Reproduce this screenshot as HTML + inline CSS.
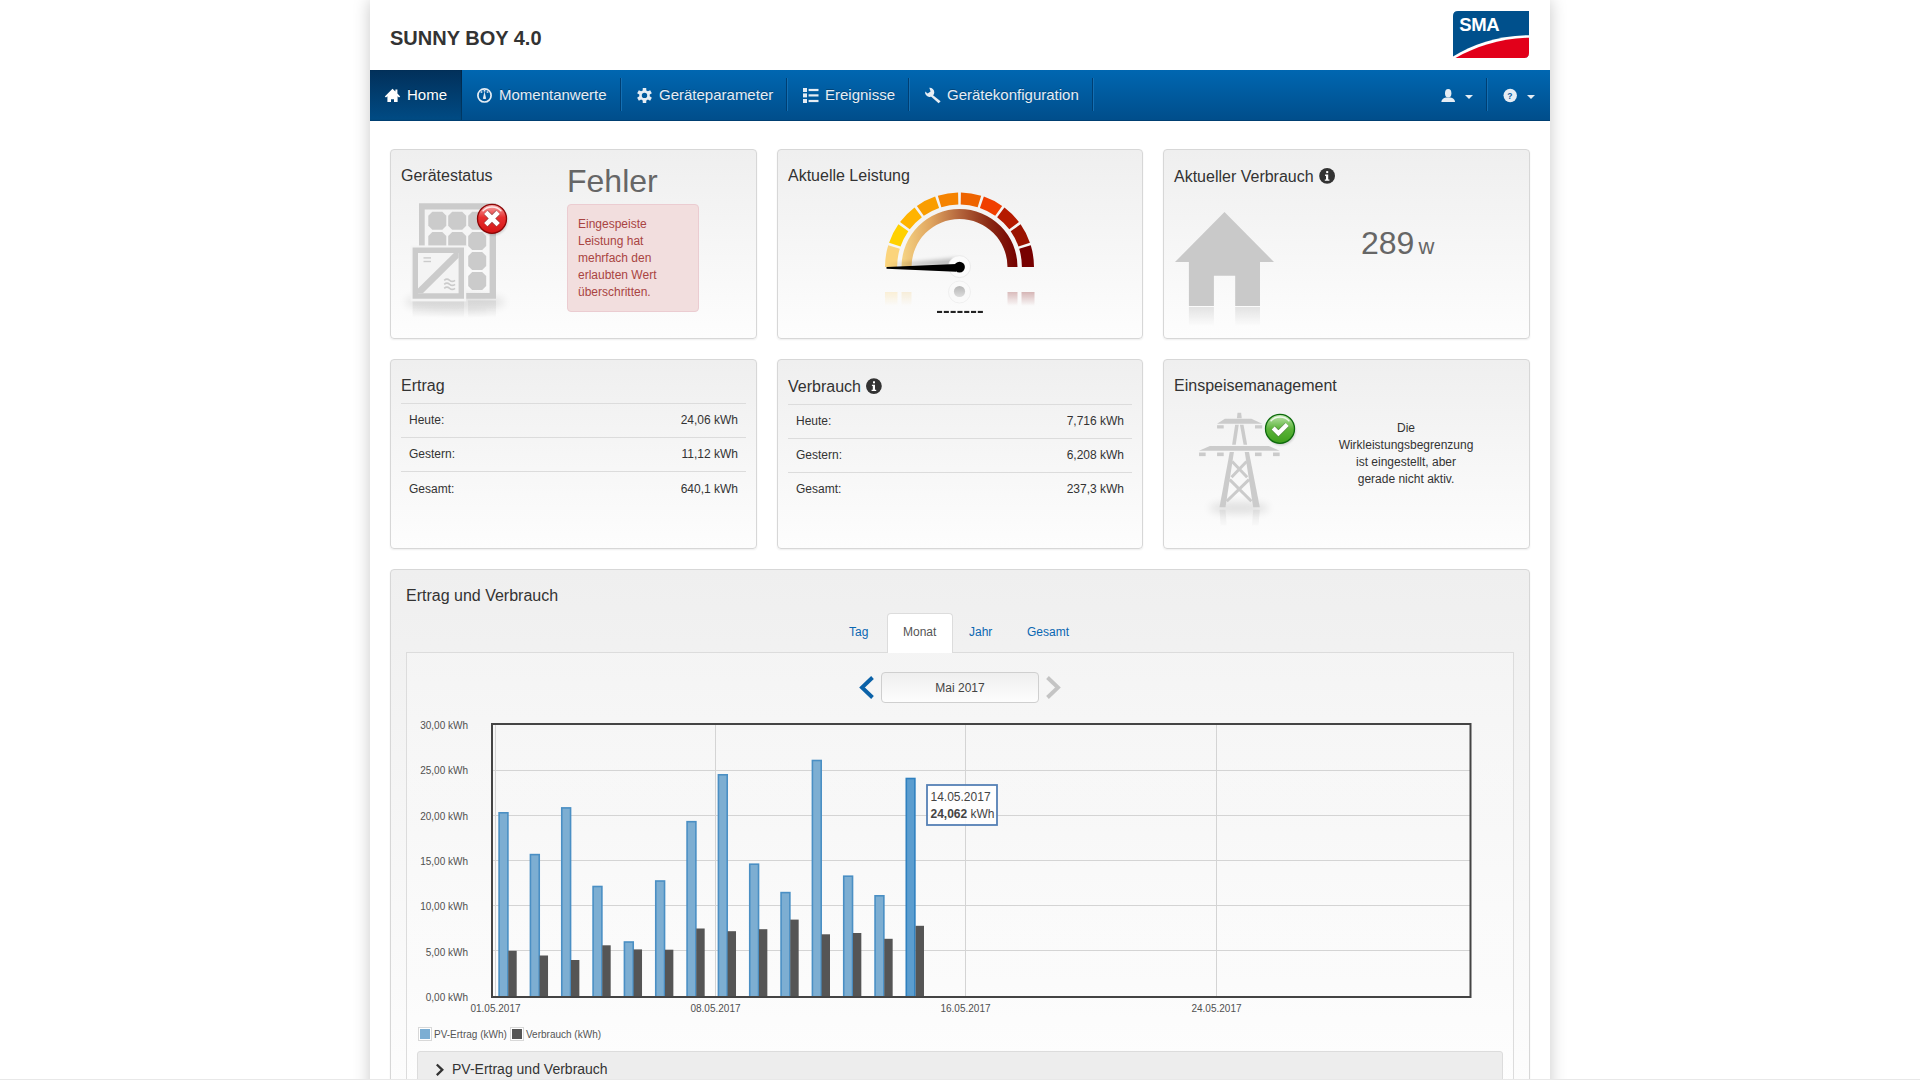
<!DOCTYPE html>
<html><head><meta charset="utf-8">
<style>
*{box-sizing:border-box;margin:0;padding:0}
html,body{width:1920px;height:1080px;overflow:hidden;background:#fff;-webkit-font-smoothing:antialiased;font-family:"Liberation Sans",sans-serif;color:#333}
.abs{position:absolute}
#wrap{position:absolute;left:370px;top:0;width:1180px;height:1200px;background:#fff;box-shadow:0 0 16px rgba(0,0,0,0.22)}
#title{position:absolute;left:390px;top:27px;font-size:20px;font-weight:bold;color:#333;line-height:23px}
#nav{position:absolute;left:370px;top:70px;width:1180px;height:51px;background:linear-gradient(#0067b1,#004e8b);border-bottom:1px solid #003f72}
.ni{position:absolute;top:0;height:50px;color:#e6edf4;font-size:15px;line-height:50px;white-space:nowrap;text-shadow:0 -1px 0 rgba(0,0,0,0.25)}
.ni.active{color:#fff;background:linear-gradient(#02305a,#004b84);box-shadow:inset -1px 0 1px rgba(0,0,0,0.25)}
.sep{position:absolute;top:8px;width:2px;height:33px;border-left:1px solid #003f73;border-right:1px solid #1470b4}
.card{position:absolute;border:1px solid #d7d7d7;border-radius:4px;background:linear-gradient(#efefef,#fdfdfd);box-shadow:0 1px 2px rgba(0,0,0,0.07)}
.ctitle{position:absolute;left:10px;top:17px;font-size:16px;color:#333;line-height:18px;white-space:nowrap}
.tbl{position:absolute;left:10px;right:10px;top:43px}
.row{position:relative;height:34px;border-top:1px solid #dcdcdc;font-size:12px;line-height:33px;color:#333}
.row .l{position:absolute;left:8px}
.row .r{position:absolute;right:8px}
#ov{position:absolute;left:0;top:0}
</style></head><body>
<div id="wrap"></div>
<div id="title">SUNNY BOY 4.0</div>

<div id="nav">
  <div class="ni active" style="left:0;width:92px"><span class="abs" style="left:37px">Home</span></div>
  <div class="ni" style="left:92px;width:159px"><span class="abs" style="left:37px">Momentanwerte</span></div>
  <div class="sep" style="left:250px"></div>
  <div class="ni" style="left:252px;width:164px"><span class="abs" style="left:37px">Geräteparameter</span></div>
  <div class="sep" style="left:416px"></div>
  <div class="ni" style="left:418px;width:121px"><span class="abs" style="left:37px">Ereignisse</span></div>
  <div class="sep" style="left:538px"></div>
  <div class="ni" style="left:540px;width:183px"><span class="abs" style="left:37px">Gerätekonfiguration</span></div>
  <div class="sep" style="left:722px"></div>
  <div class="sep" style="left:1116px"></div>
</div>

<div class="card" style="left:390px;top:149px;width:367px;height:190px">
  <div class="ctitle">Gerätestatus</div>
  <div class="abs" style="left:176px;top:11px;font-size:32px;line-height:40px;color:#666">Fehler</div>
  <div class="abs" style="left:176px;top:54px;width:132px;height:108px;background:#f2dede;border:1px solid #ebccd1;border-radius:4px;color:#a94442;font-size:12px;line-height:17px;padding:11px 10px">Eingespeiste Leistung hat mehrfach den erlaubten Wert überschritten.</div>
</div>
<div class="card" style="left:777px;top:149px;width:366px;height:190px"><div class="ctitle">Aktuelle Leistung</div></div>
<div class="card" style="left:1163px;top:149px;width:367px;height:190px"><div class="ctitle" style="top:18px">Aktueller Verbrauch</div>
  <div class="abs" style="left:197px;top:73px;font-size:32px;line-height:40px;color:#666;white-space:nowrap">289<span style="font-size:22px;margin-left:4px">w</span></div>
</div>

<div class="card" style="left:390px;top:359px;width:367px;height:190px"><div class="ctitle">Ertrag</div>
  <div class="tbl"><div class="row"><span class="l">Heute:</span><span class="r">24,06 kWh</span></div><div class="row"><span class="l">Gestern:</span><span class="r">11,12 kWh</span></div><div class="row" style="line-height:35px"><span class="l">Gesamt:</span><span class="r">640,1 kWh</span></div></div>
</div>
<div class="card" style="left:777px;top:359px;width:366px;height:190px"><div class="ctitle" style="top:18px">Verbrauch</div>
  <div class="tbl" style="top:44px"><div class="row"><span class="l">Heute:</span><span class="r">7,716 kWh</span></div><div class="row"><span class="l">Gestern:</span><span class="r">6,208 kWh</span></div><div class="row"><span class="l">Gesamt:</span><span class="r">237,3 kWh</span></div></div>
</div>
<div class="card" style="left:1163px;top:359px;width:367px;height:190px"><div class="ctitle">Einspeisemanagement</div>
  <div class="abs" style="left:160px;top:60px;width:164px;text-align:center;font-size:12px;line-height:17px;color:#333">Die<br>Wirkleistungsbegrenzung<br>ist eingestellt, aber<br>gerade nicht aktiv.</div>
</div>

<div class="card" style="left:390px;top:569px;width:1140px;height:620px;background:linear-gradient(#efefef,#fdfdfd 85%)">
  <div class="ctitle" style="left:15px;top:17px">Ertrag und Verbrauch</div>
</div>
<div class="abs" style="left:406px;top:652px;width:1108px;height:500px;border:1px solid #dcdcdc;border-bottom:none;background:linear-gradient(rgba(255,255,255,0.25),rgba(255,255,255,0.3))"></div>
<div class="abs" style="left:887px;top:613px;width:66px;height:40px;background:#fff;border:1px solid #dcdcdc;border-bottom:none;border-radius:4px 4px 0 0"></div>
<div class="abs" style="left:849px;top:625px;font-size:12px;line-height:14px;color:#0a67b2">Tag</div>
<div class="abs" style="left:903px;top:625px;font-size:12px;line-height:14px;color:#555">Monat</div>
<div class="abs" style="left:969px;top:625px;font-size:12px;line-height:14px;color:#0a67b2">Jahr</div>
<div class="abs" style="left:1027px;top:625px;font-size:12px;line-height:14px;color:#0a67b2">Gesamt</div>
<div class="abs" style="left:881px;top:672px;width:158px;height:31px;border:1px solid #cfcfcf;border-radius:4px;background:linear-gradient(#efefef,#fdfdfd);font-size:12px;line-height:31px;text-align:center;color:#444">Mai 2017</div>
<div class="abs" style="left:417px;top:1051px;width:1086px;height:60px;border:1px solid #dcdcdc;border-radius:3px;background:#ededed"></div>
<div class="abs" style="left:452px;top:1061px;font-size:14px;line-height:16px;color:#333">PV-Ertrag und Verbrauch</div>
<div class="abs" style="left:0;top:1079px;width:1920px;height:1px;background:#e8e8e8"></div>
<svg id="ov" width="1920" height="1080" viewBox="0 0 1920 1080" font-family="Liberation Sans"><defs><linearGradient id="arcg" x1="901" y1="0" x2="1018" y2="0" gradientUnits="userSpaceOnUse"><stop offset="0" stop-color="#f6d585"/><stop offset="0.25" stop-color="#e0a660"/><stop offset="0.5" stop-color="#b4653c"/><stop offset="0.75" stop-color="#8a2a14"/><stop offset="1" stop-color="#740000"/></linearGradient><linearGradient id="redb" x1="0" y1="0" x2="0" y2="1"><stop offset="0" stop-color="#f8b0b0"/><stop offset="0.45" stop-color="#e83030"/><stop offset="1" stop-color="#d41414"/></linearGradient><linearGradient id="grnb" x1="0" y1="0" x2="0" y2="1"><stop offset="0" stop-color="#c4e8b4"/><stop offset="0.5" stop-color="#5cb43a"/><stop offset="1" stop-color="#3e9e1c"/></linearGradient><linearGradient id="refl" x1="0" y1="0" x2="0" y2="1"><stop offset="0" stop-color="#fff" stop-opacity="0"/><stop offset="1" stop-color="#fff" stop-opacity="1"/></linearGradient><linearGradient id="mg" x1="0" y1="0" x2="0" y2="1"><stop offset="0" stop-color="#fff"/><stop offset="1" stop-color="#000"/></linearGradient><mask id="m_dev"><rect x="405" y="299" width="100" height="19" fill="url(#mg)"/></mask><mask id="m_gauge"><rect x="880" y="291" width="160" height="15" fill="url(#mg)"/></mask><mask id="m_house"><rect x="1180" y="306" width="90" height="20" fill="url(#mg)"/></mask><mask id="m_tower"><rect x="1210" y="508" width="60" height="20" fill="url(#mg)"/></mask><linearGradient id="dotg" x1="0" y1="0" x2="0" y2="1"><stop offset="0" stop-color="#b6b6b6"/><stop offset="1" stop-color="#dcdcdc"/></linearGradient><filter id="blur2" x="-50%" y="-50%" width="200%" height="200%"><feGaussianBlur stdDeviation="2"/></filter><filter id="blur4" x="-50%" y="-50%" width="200%" height="200%"><feGaussianBlur stdDeviation="4"/></filter><filter id="blur1" x="-50%" y="-50%" width="200%" height="200%"><feGaussianBlur stdDeviation="0.8"/></filter></defs><g transform="translate(1453,11)"><path d="M5,0 H76 V42 Q76,47 71,47 H0 V5 Q0,0 5,0 Z" fill="#00508c"/><path d="M0,45.5 C20,33 45,24.5 76,24.2 V42 Q76,47 71,47 H0 Z" fill="#fff"/><path d="M2.5,47 C22,36 48,27.2 76,26.8 V42 Q76,47 71,47 Z" fill="#e2001a"/><text x="6.3" y="20.2" font-weight="bold" font-size="18.5" fill="#fff" letter-spacing="-0.4">SMA</text></g><g fill="#e6edf4"><path fill="#fff" d="M392.5,88.8 L384.8,96.4 L386,97.6 L387.4,96.3 V102 H391 V99.2 H394 V102 H397.6 V96.3 L399,97.6 L400.2,96.4 L397.4,93.6 V89.4 H395.4 V91.6 Z"/><circle cx="484.5" cy="95.4" r="6.6" fill="none" stroke="#e6edf4" stroke-width="1.7"/><path d="M484.5,91.2 L486.1,98.4 Q484.5,99.6 482.9,98.4 Z"/><rect x="480.6" y="91.3" width="1.7" height="1.5"/><rect x="483.7" y="90" width="1.7" height="1.6"/><rect x="486.7" y="91.3" width="1.7" height="1.5"/><path fill-rule="evenodd" d="M642.77,87.9 L646.23,87.9 L646.31,90.42 L647.91,91.34 L650.13,90.15 L651.86,93.15 L649.72,94.48 L649.72,96.32 L651.86,97.65 L650.13,100.65 L647.91,99.46 L646.31,100.38 L646.23,102.9 L642.77,102.9 L642.69,100.38 L641.09,99.46 L638.87,100.65 L637.14,97.65 L639.28,96.32 L639.28,94.48 L637.14,93.15 L638.87,90.15 L641.09,91.34 L642.69,90.42Z M647.2,95.4 A2.7,2.7 0 1 0 641.8,95.4 A2.7,2.7 0 1 0 647.2,95.4 Z"/><rect x="803" y="88" width="4" height="4"/><rect x="808.6" y="88.9" width="9.9" height="2.2"/><rect x="803" y="93.4" width="4" height="4"/><rect x="808.6" y="94.3" width="9.9" height="2.2"/><rect x="803" y="99" width="4" height="4"/><rect x="808.6" y="99.9" width="9.9" height="2.2"/><path d="M931.2,93.8 L940.6,101.2 L938.6,103.2 L929.9,95.4 Z"/><path fill-rule="evenodd" d="M929.3,87.8 A4.6,4.6 0 1 1 925.2,91.4 L927.6,93.6 L930.6,91.6 Z"/><ellipse cx="1448.2" cy="93.2" rx="3.2" ry="4.3"/><path d="M1441.3,102 Q1441.8,98.3 1446,97.6 H1450.4 Q1454.6,98.3 1455.1,102 Z"/><path d="M1465,95 H1473 L1469,99 Z"/><path d="M1527,95 H1535 L1531,99 Z"/><circle cx="1510.2" cy="95.5" r="6.7"/><text x="1509.9" y="98.6" font-size="8.5" font-weight="bold" fill="#0b5c9c" text-anchor="middle">?</text></g><g><ellipse cx="455" cy="302" rx="50" ry="9" fill="#000" opacity="0.09" filter="url(#blur4)"/><g mask="url(#m_dev)" fill="#cbcbcb"><rect x="412.6" y="300.5" width="51.4" height="17" opacity="0.6"/><rect x="468" y="300.5" width="28" height="17" opacity="0.6"/><rect x="468.2" y="307.5" width="18" height="12" rx="3" opacity="0.25"/></g><path fill="#cbcbcb" fill-rule="evenodd" d="M419,203.2 H496 V298.7 H419 Z M424.7,209.4 V293 H489.6 V209.4 Z"/><path fill="#cbcbcb" d="M432.3,211.8 H442.3 L446.3,215.8 V225.8 L442.3,229.8 H432.3 L428.3,225.8 V215.8 Z"/><path fill="#cbcbcb" d="M452.2,211.8 H462.2 L466.2,215.8 V225.8 L462.2,229.8 H452.2 L448.2,225.8 V215.8 Z"/><path fill="#cbcbcb" d="M472.2,211.8 H482.2 L486.2,215.8 V225.8 L482.2,229.8 H472.2 L468.2,225.8 V215.8 Z"/><path fill="#cbcbcb" d="M432.3,232 H442.3 L446.3,236 V246 L442.3,250 H432.3 L428.3,246 V236 Z"/><path fill="#cbcbcb" d="M452.2,232 H462.2 L466.2,236 V246 L462.2,250 H452.2 L448.2,246 V236 Z"/><path fill="#cbcbcb" d="M472.2,232 H482.2 L486.2,236 V246 L482.2,250 H472.2 L468.2,246 V236 Z"/><path fill="#cbcbcb" d="M472.2,252 H482.2 L486.2,256 V266 L482.2,270 H472.2 L468.2,266 V256 Z"/><path fill="#cbcbcb" d="M472.2,272 H482.2 L486.2,276 V286 L482.2,290 H472.2 L468.2,286 V276 Z"/><rect x="410.6" y="245.4" width="55.6" height="56" fill="#f4f4f4"/><path fill="#cbcbcb" fill-rule="evenodd" d="M412.6,247.6 H464 V298.7 H412.6 Z M418,253 V293.3 H458.6 V253 Z"/><path d="M418,293.3 V288.6 L453.9,253 H458.6 V257.7 L422.8,293.3 Z" fill="#cbcbcb"/><rect x="423.5" y="257.2" width="7.5" height="1.4" fill="#cbcbcb"/><rect x="423.5" y="260.8" width="7.5" height="1.4" fill="#cbcbcb"/><path d="M444.2,280.3 q2.7,-2.2 5.4,0 t5.4,0" fill="none" stroke="#cbcbcb" stroke-width="1.7"/><path d="M444.2,284.3 q2.7,-2.2 5.4,0 t5.4,0" fill="none" stroke="#cbcbcb" stroke-width="1.7"/><path d="M444.2,288.3 q2.7,-2.2 5.4,0 t5.4,0" fill="none" stroke="#cbcbcb" stroke-width="1.7"/></g><circle cx="493" cy="220.8" r="14.5" fill="#000" opacity="0.16" filter="url(#blur1)"/><circle cx="492" cy="218.8" r="14.5" fill="url(#redb)" stroke="#8c0606" stroke-width="1.3"/><path d="M482.6,211.2 A12.6,12.6 0 0 1 501.4,211.2" fill="none" stroke="#fff" stroke-width="1.3" opacity="0.8"/><path d="M485.8,212.3 L498.2,224.7 M498.2,212.3 L485.8,224.7" stroke="#555" stroke-width="6.2" opacity="0.45"/><path d="M485.8,212.3 L498.2,224.7 M498.2,212.3 L485.8,224.7" stroke="#fff" stroke-width="4.6"/><path d="M885,267 A74.5,74.5 0 0 1 888.22,245.33 L899.8,248.85 A62.4,62.4 0 0 0 897.1,267 Z" fill="#fbd47c"/><path d="M889.1,242.64 A74.5,74.5 0 0 1 898.41,224.36 L908.33,231.29 A62.4,62.4 0 0 0 900.53,246.59 Z" fill="#ffd100"/><path d="M900.07,222.07 A74.5,74.5 0 0 1 914.57,207.57 L921.87,217.22 A62.4,62.4 0 0 0 909.72,229.37 Z" fill="#ffb300"/><path d="M916.86,205.91 A74.5,74.5 0 0 1 935.14,196.6 L939.09,208.03 A62.4,62.4 0 0 0 923.79,215.83 Z" fill="#f99d00"/><path d="M937.83,195.72 A74.5,74.5 0 0 1 958.09,192.51 L958.31,204.61 A62.4,62.4 0 0 0 941.35,207.3 Z" fill="#f58300"/><path d="M960.91,192.51 A74.5,74.5 0 0 1 981.17,195.72 L977.65,207.3 A62.4,62.4 0 0 0 960.69,204.61 Z" fill="#ee6400"/><path d="M983.86,196.6 A74.5,74.5 0 0 1 1002.14,205.91 L995.21,215.83 A62.4,62.4 0 0 0 979.91,208.03 Z" fill="#f03f00"/><path d="M1004.43,207.57 A74.5,74.5 0 0 1 1018.93,222.07 L1009.28,229.37 A62.4,62.4 0 0 0 997.13,217.22 Z" fill="#b51a00"/><path d="M1020.59,224.36 A74.5,74.5 0 0 1 1029.9,242.64 L1018.47,246.59 A62.4,62.4 0 0 0 1010.67,231.29 Z" fill="#9a1200"/><path d="M1030.78,245.33 A74.5,74.5 0 0 1 1034,267 L1021.9,267 A62.4,62.4 0 0 0 1019.2,248.85 Z" fill="#770000"/><path d="M901.5,267 A58,58 0 0 1 1017.5,267 L1007.5,267 A48,48 0 0 0 911.5,267 Z" fill="url(#arcg)"/><g opacity="0.3" mask="url(#m_gauge)"><rect x="885" y="292" width="12.5" height="14" fill="#fbd47c"/><rect x="901.5" y="292" width="10" height="14" fill="#f1cf88"/><rect x="1007.5" y="292" width="10" height="14" fill="#8a2020"/><rect x="1021.5" y="292" width="13" height="14" fill="#7a0808"/></g><circle cx="959.5" cy="292" r="11" fill="#fafafa" stroke="#ececec" stroke-width="0.8"/><circle cx="959.5" cy="291.5" r="5.6" fill="url(#dotg)"/><path d="M887,265 L957,258 L957,266 Z" fill="#000" opacity="0.25" filter="url(#blur2)"/><circle cx="959.5" cy="266.6" r="11" fill="#fbfbfb" stroke="#e6e6e6" stroke-width="0.8"/><path d="M886.5,266.9 L956,264 L956,271.8 L886.5,268.7 Z" fill="#000"/><circle cx="959.5" cy="267.1" r="5.4" fill="#000"/><rect x="937" y="310.9" width="5.1" height="2.1" fill="#222"/><rect x="943.8" y="310.9" width="5.1" height="2.1" fill="#222"/><rect x="950.6" y="310.9" width="5.1" height="2.1" fill="#222"/><rect x="957.4" y="310.9" width="5.1" height="2.1" fill="#222"/><rect x="964.2" y="310.9" width="5.1" height="2.1" fill="#222"/><rect x="971" y="310.9" width="5.1" height="2.1" fill="#222"/><rect x="977.8" y="310.9" width="5.1" height="2.1" fill="#222"/><circle cx="1327.1" cy="175.9" r="8.3" fill="#fff" opacity="0.8"/><circle cx="1327.1" cy="175.9" r="7.9" fill="#333"/><rect x="1326.2" y="171.1" width="2" height="2" fill="#fff"/><path d="M1325.1,174.6 H1328.2 V179.5 H1329.4 V180.8 H1324.8 V179.5 H1326 V175.9 H1325.1 Z" fill="#fff"/><circle cx="873.9" cy="386.1" r="8.3" fill="#fff" opacity="0.8"/><circle cx="873.9" cy="386.1" r="7.9" fill="#333"/><rect x="873" y="381.3" width="2" height="2" fill="#fff"/><path d="M871.9,384.8 H875 V389.7 H876.2 V391 H871.6 V389.7 H872.8 V386.1 H871.9 Z" fill="#fff"/><path d="M1224.5,212 L1274,262 H1260 V306 H1235.2 V275.7 H1213.9 V306 H1188.9 V262 H1175 Z" fill="#c9c9c9"/><g opacity="0.5" mask="url(#m_house)"><rect x="1188.9" y="307" width="25" height="19" fill="#c9c9c9"/><rect x="1235.2" y="307" width="24.8" height="19" fill="#c9c9c9"/></g><ellipse cx="1239" cy="508" rx="30" ry="6" fill="#000" opacity="0.10" filter="url(#blur4)"/><g fill="#cbcbcb"><path d="M1237.53,412.82 L1241.14,412.82 L1241.74,418.24 L1236.93,418.24 Z"/><path d="M1224.9,418.84 L1251.37,418.84 L1262.2,423.65 L1217.08,423.65 Z"/><rect x="1217.08" y="425.22" width="6.62" height="3.25"/><rect x="1254.98" y="425.22" width="7.22" height="3.25"/><path d="M1235.13,424.86 L1238.74,424.86 L1235.73,444.71 L1232.12,444.71 Z"/><path d="M1239.94,424.86 L1243.55,424.86 L1247.16,444.71 L1243.55,444.71 Z"/><path d="M1209.86,445.91 L1268.82,445.91 L1279.65,450.73 L1199.03,450.73 Z"/><rect x="1199.03" y="452.53" width="6.62" height="3.61"/><rect x="1217.08" y="452.53" width="6.62" height="3.61"/><rect x="1254.98" y="452.53" width="6.62" height="3.61"/><rect x="1273.03" y="452.53" width="6.62" height="3.61"/><path d="M1229.71,451.93 L1233.92,451.93 L1225.5,507.29 L1219.48,507.29 Z"/><path d="M1244.75,451.93 L1248.97,451.93 L1259.8,507.29 L1253.18,507.29 Z"/></g><path d="M1232.12,461.56 L1247.16,477.2 M1246.56,461.56 L1231.52,477.2 M1229.71,479.61 L1251.37,501.27 M1248.97,479.61 L1226.7,501.27" stroke="#cbcbcb" stroke-width="3"/><g opacity="0.45" fill="#cbcbcb" mask="url(#m_tower)"><path d="M1219.48,509.69 L1225.5,509.69 L1226.7,525.34 L1220.69,525.34 Z"/><path d="M1253.18,509.69 L1259.8,509.69 L1258.59,525.34 L1251.97,525.34 Z"/></g><circle cx="1281" cy="430.8" r="14.5" fill="#000" opacity="0.16" filter="url(#blur1)"/><circle cx="1280" cy="428.8" r="14.5" fill="url(#grnb)" stroke="#0d6a0d" stroke-width="1.3"/><path d="M1270.6,421.2 A12.6,12.6 0 0 1 1289.4,421.2" fill="none" stroke="#fff" stroke-width="1.3" opacity="0.8"/><path d="M1273.2,428 L1278.4,433.2 L1287.2,424.4" fill="none" stroke="#555" stroke-width="5.6" opacity="0.4"/><path d="M1273.2,428 L1278.4,433.2 L1287.2,424.4" fill="none" stroke="#fff" stroke-width="4.2"/><g><rect x="493" y="770" width="977" height="1" fill="#d4d4d4"/><rect x="493" y="815" width="977" height="1" fill="#d4d4d4"/><rect x="493" y="860" width="977" height="1" fill="#d4d4d4"/><rect x="493" y="905" width="977" height="1" fill="#d4d4d4"/><rect x="493" y="950" width="977" height="1" fill="#d4d4d4"/><rect x="495" y="725" width="1" height="271" fill="#d4d4d4"/><rect x="715" y="725" width="1" height="271" fill="#d4d4d4"/><rect x="965" y="725" width="1" height="271" fill="#d4d4d4"/><rect x="1216" y="725" width="1" height="271" fill="#d4d4d4"/><rect x="499.1" y="812.8" width="8.8" height="184" fill="#7daed2" stroke="#4a8fc4" stroke-width="1.6"/><rect x="508.3" y="950.8" width="8.4" height="45.2" fill="#555"/><rect x="530.43" y="854.6" width="8.8" height="142.2" fill="#7daed2" stroke="#4a8fc4" stroke-width="1.6"/><rect x="539.63" y="955.5" width="8.4" height="40.5" fill="#555"/><rect x="561.76" y="807.9" width="8.8" height="188.9" fill="#7daed2" stroke="#4a8fc4" stroke-width="1.6"/><rect x="570.96" y="960" width="8.4" height="36" fill="#555"/><rect x="593.09" y="886.5" width="8.8" height="110.3" fill="#7daed2" stroke="#4a8fc4" stroke-width="1.6"/><rect x="602.29" y="945.3" width="8.4" height="50.7" fill="#555"/><rect x="624.42" y="942" width="8.8" height="54.8" fill="#7daed2" stroke="#4a8fc4" stroke-width="1.6"/><rect x="633.62" y="949.4" width="8.4" height="46.6" fill="#555"/><rect x="655.75" y="881" width="8.8" height="115.8" fill="#7daed2" stroke="#4a8fc4" stroke-width="1.6"/><rect x="664.95" y="949.7" width="8.4" height="46.3" fill="#555"/><rect x="687.08" y="821.7" width="8.8" height="175.1" fill="#7daed2" stroke="#4a8fc4" stroke-width="1.6"/><rect x="696.28" y="928.5" width="8.4" height="67.5" fill="#555"/><rect x="718.41" y="774.8" width="8.8" height="222" fill="#7daed2" stroke="#4a8fc4" stroke-width="1.6"/><rect x="727.61" y="931.2" width="8.4" height="64.8" fill="#555"/><rect x="749.74" y="864.2" width="8.8" height="132.6" fill="#7daed2" stroke="#4a8fc4" stroke-width="1.6"/><rect x="758.94" y="929.2" width="8.4" height="66.8" fill="#555"/><rect x="781.07" y="892.6" width="8.8" height="104.2" fill="#7daed2" stroke="#4a8fc4" stroke-width="1.6"/><rect x="790.27" y="919.6" width="8.4" height="76.4" fill="#555"/><rect x="812.4" y="760.5" width="8.8" height="236.3" fill="#7daed2" stroke="#4a8fc4" stroke-width="1.6"/><rect x="821.6" y="934.3" width="8.4" height="61.7" fill="#555"/><rect x="843.73" y="876.2" width="8.8" height="120.6" fill="#7daed2" stroke="#4a8fc4" stroke-width="1.6"/><rect x="852.93" y="933" width="8.4" height="63" fill="#555"/><rect x="875.06" y="895.8" width="8.8" height="101" fill="#7daed2" stroke="#4a8fc4" stroke-width="1.6"/><rect x="884.26" y="938.8" width="8.4" height="57.2" fill="#555"/><rect x="906.29" y="778.5" width="8.6" height="218.2" fill="#5b9dcf" stroke="#2f80bf" stroke-width="1.6"/><rect x="915.59" y="925.8" width="8.4" height="70.2" fill="#555"/><rect x="492" y="724" width="978.5" height="273" fill="none" stroke="#444" stroke-width="2"/><text x="468" y="729" font-size="10" fill="#505050" text-anchor="end">30,00 kWh</text><text x="468" y="774.33" font-size="10" fill="#505050" text-anchor="end">25,00 kWh</text><text x="468" y="819.66" font-size="10" fill="#505050" text-anchor="end">20,00 kWh</text><text x="468" y="864.99" font-size="10" fill="#505050" text-anchor="end">15,00 kWh</text><text x="468" y="910.32" font-size="10" fill="#505050" text-anchor="end">10,00 kWh</text><text x="468" y="955.65" font-size="10" fill="#505050" text-anchor="end">5,00 kWh</text><text x="468" y="1000.98" font-size="10" fill="#505050" text-anchor="end">0,00 kWh</text><text x="495.5" y="1012" font-size="10" fill="#505050" text-anchor="middle">01.05.2017</text><text x="715.5" y="1012" font-size="10" fill="#505050" text-anchor="middle">08.05.2017</text><text x="965.5" y="1012" font-size="10" fill="#505050" text-anchor="middle">16.05.2017</text><text x="1216.5" y="1012" font-size="10" fill="#505050" text-anchor="middle">24.05.2017</text><rect x="927" y="785" width="70" height="40" fill="#fff" fill-opacity="0.85" stroke="#5580b5" stroke-width="1.8"/><text x="930.5" y="801" font-size="12" fill="#444">14.05.2017</text><text x="930.5" y="818" font-size="12" fill="#444"><tspan font-weight="bold">24,062</tspan> kWh</text><rect x="418.5" y="1027.5" width="13" height="13" fill="#fff" stroke="#d8d8d8" stroke-width="1"/><rect x="420" y="1029" width="10" height="10" fill="#7caed3"/><text x="434" y="1038" font-size="10" fill="#555">PV-Ertrag (kWh)</text><rect x="510.5" y="1027.5" width="13" height="13" fill="#fff" stroke="#d8d8d8" stroke-width="1"/><rect x="512" y="1029" width="10" height="10" fill="#555"/><text x="526" y="1038" font-size="10" fill="#555">Verbrauch (kWh)</text></g><path d="M872.5,677.5 L862,687.5 L872.5,697.5" fill="none" stroke="#0b62a8" stroke-width="3.9"/><path d="M1047.5,677.5 L1058,687.5 L1047.5,697.5" fill="none" stroke="#c4c4c4" stroke-width="3.9"/><path d="M436.8,1064.5 L442.3,1069.8 L436.8,1075.1" fill="none" stroke="#333" stroke-width="2.3"/></svg></body></html>
